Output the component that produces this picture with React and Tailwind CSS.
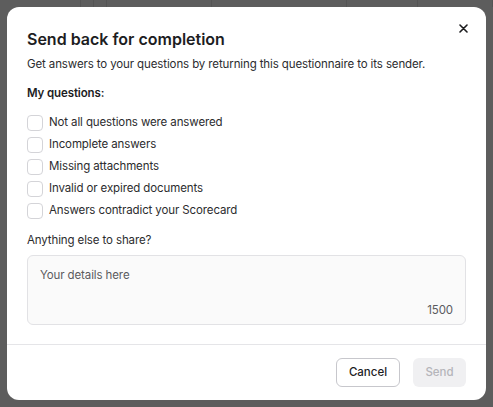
import { useState } from "react";

const reasons = [
  "Not all questions were answered",
  "Incomplete answers",
  "Missing attachments",
  "Invalid or expired documents",
  "Answers contradict your Scorecard",
];

const bgCols = ["w-[81px]", "w-[13px]", "w-[13px]", "w-[105px]", "w-[135px]", "w-[71px]", "w-[75px]"];

export default function App() {
  const [checked, setChecked] = useState({});

  return (
    <div className="w-[493px] h-[407px] bg-[#5d5d5d] overflow-hidden font-['Inter','Liberation_Sans',sans-serif] text-[#1d1d1f]">
      <div className="flex h-[7px]">
        {bgCols.map((w, i) => (
          <div key={i} className={`${w} h-full border-r border-[#545454]`} />
        ))}
      </div>

      <div className="mx-[7px] h-[393px] bg-white rounded-[12px] flex flex-col">
        <div className="px-[20px] pt-[13px] flex-1">
          <div className="flex justify-end">
            <button className="w-[12px] h-[12px] mt-[2px] mr-[-3px] flex items-center justify-center text-[#1d1d1f]">
              <svg width="9" height="9" viewBox="0 0 9 9" fill="none">
                <path d="M1 1L8 8M8 1L1 8" stroke="currentColor" strokeWidth="1.6" strokeLinecap="round" />
              </svg>
            </button>
          </div>
          <h2 className="text-[16px] leading-[20px] font-semibold -mt-[5px]">Send back for completion</h2>
          <p className="mt-[7px] text-[11.5px] tracking-[-0.01em] leading-[16px] text-[#2c2c2e]">
            Get answers to your questions by returning this questionnaire to its sender.
          </p>

          <div className="mt-[13px] text-[11.5px] tracking-[-0.01em] leading-[16px] font-semibold">My questions:</div>

          <div className="mt-[14px] flex flex-col gap-[6px]">
            {reasons.map((r, i) => (
              <label key={r} className="flex items-center gap-[6px] h-[16px] text-[11.5px] tracking-[-0.01em] text-[#2c2c2e] cursor-pointer">
                <input
                  type="checkbox"
                  className="sr-only"
                  checked={!!checked[i]}
                  onChange={() => setChecked({ ...checked, [i]: !checked[i] })}
                />
                <span className={`w-[16px] h-[16px] rounded-[4px] border border-[#d4d4d8] ${checked[i] ? "bg-[#1d1d1f]" : "bg-white"}`} />
                {r}
              </label>
            ))}
          </div>

          <div className="mt-[13px] text-[11.5px] tracking-[-0.01em] leading-[16px] text-[#2c2c2e]">Anything else to share?</div>

          <div className="mt-[7px] h-[70px] rounded-[6px] border border-[#e2e2e5] bg-[#fafafa] px-[12px] pt-[12px] pb-[6px] flex flex-col justify-between">
            <div className="text-[11.5px] tracking-[-0.01em] leading-[15px] text-[#5a5a5e]">Your details here</div>
            <div className="text-[11.5px] tracking-[-0.01em] leading-[15px] text-[#5a5a5e] text-right">1500</div>
          </div>
        </div>

        <div className="border-t border-[#e5e5e8] h-[56px] px-[20px] flex items-center justify-end gap-[13px]">
          <button className="h-[29px] w-[64px] rounded-[6px] border border-[#c7c7cc] text-[11.5px] font-medium bg-white">
            Cancel
          </button>
          <button className="h-[29px] w-[53px] rounded-[6px] bg-[#f0f0f2] text-[11.5px] font-medium text-[#b5b5ba]">
            Send
          </button>
        </div>
      </div>
    </div>
  );
}
